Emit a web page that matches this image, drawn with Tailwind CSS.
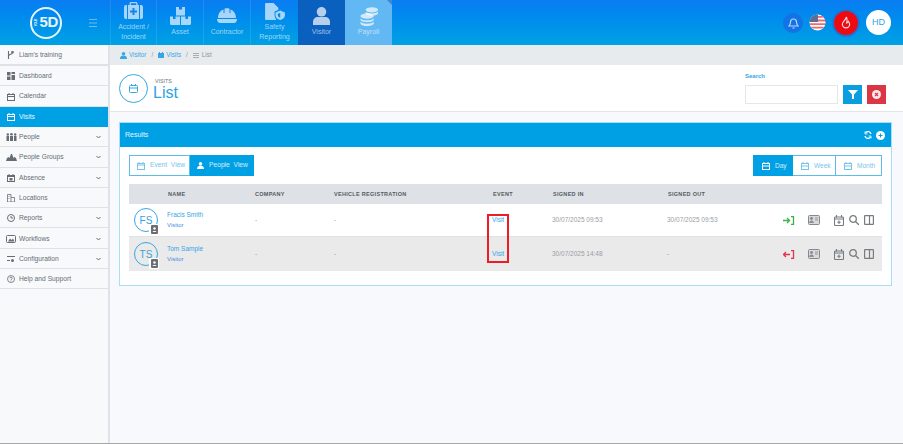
<!DOCTYPE html>
<html>
  <head>
    <title>Visits</title>
    <script src="https://cdn.jsdelivr.net/npm/@tailwindcss/browser@4"></script>
  </head>
  <body class="w-[903px] h-[444px] overflow-hidden bg-[#f7f9fc] font-['Liberation_Sans',sans-serif] text-[#6c757d]">
    <!-- top bar -->
    <header class="h-[45px] flex bg-gradient-to-b from-[#0a7cf2] to-[#00a1e4]">
      <div class="w-[110px] flex items-center shrink-0">
        <div class="ml-[30px] w-[32px] h-[32px] rounded-full border-2 border-white/90 flex items-center justify-center text-white/90 text-[15px] tracking-tight font-bold"><span class="text-[3px] mr-[1px] [writing-mode:vertical-rl] rotate-180">YOUR</span>5D</div>
        <svg class="ml-[27px] w-[8px] h-[8px] text-white/40" viewBox="0 0 8 8" stroke="currentColor" fill="none"><path d="M0 .5h8M0 4h8M0 7.500h8"/></svg>
      </div>
      <nav class="flex text-[7px] leading-[10px] text-white/60 text-center">
        <a class="w-[46px] border-l border-white/10 flex flex-col items-center pt-[2px]">
          <svg class="w-[19px] h-[17px] text-white/65" viewBox="0 0 19 17" fill="currentColor"><path d="M5.500 3V1.500C5.500.7 6.200 0 7 0h5c.8 0 1.500.7 1.500 1.500V3h-1.300V1.300H6.800V3zM0 5a2 2 0 0 1 2-2h1v14H2a2 2 0 0 1-2-2zM4 3h11v14H4zM16 3h1a2 2 0 0 1 2 2v10a2 2 0 0 1-2 2h-1z"/><path d="M8.500 6h2v2.500H13v2h-2.500V13h-2v-2.500H6v-2h2.500z" fill="#1384ea"/></svg>
          <span class="mt-[3px]">Accident /<br>Incident</span>
        </a>
        <a class="w-[47px] border-l border-white/10 flex flex-col items-center pt-[7px]">
          <svg class="w-[21px] h-[18px] text-white/65" viewBox="0 0 21 18" fill="currentColor"><path d="M6 0h3v2.500h3V0h3v8.500H6zM0 9.500h3V12h2.500V9.500H10V18H1.500A1.500 1.500 0 0 1 0 16.500zM11 9.500h4.500V12H18V9.500h3v7a1.500 1.500 0 0 1-1.500 1.500H11z"/></svg>
          <span class="mt-[2px]">Asset</span>
        </a>
        <a class="w-[47px] border-l border-white/10 flex flex-col items-center pt-[8px]">
          <svg class="w-[20px] h-[15px] text-white/65" viewBox="0 0 20 15" fill="currentColor"><path d="M1 10C1 5.500 3.500 2.500 6.500 1.500V5h1V.8C8.200.4 9 .3 10 .3s1.800.1 2.500.5V5h1V1.500c3 1 5.500 4 5.500 8.500z"/><path d="M0 11h20c0 2-1 4-3 4H3c-2 0-3-2-3-4z"/></svg>
          <span class="mt-[4px]">Contractor</span>
        </a>
        <a class="w-[48px] border-l border-white/10 flex flex-col items-center pt-[3px]">
          <svg class="w-[20px] h-[17px] text-white/65" viewBox="0 0 21 18" fill="currentColor"><path d="M1 0h8l5 5v2.500L10 9v3c0 2 .5 4 2 6H1a1 1 0 0 1-1-1V1a1 1 0 0 1 1-1z"/><path d="M16 8l5 2v3c0 2.500-2 4-5 5-3-1-5-2.500-5-5v-3zm0 2.500L13.500 11.500V13c0 1.200 1 2 2.500 2.700z" fill-rule="evenodd"/></svg>
          <span class="mt-[2px]">Safety<br>Reporting</span>
        </a>
        <a class="w-[47px] bg-[#0960bf] flex flex-col items-center pt-[7px]">
          <svg class="w-[17px] h-[18px] text-white/70" viewBox="0 0 17 18" fill="currentColor"><circle cx="8.500" cy="4.800" r="4.800"/><path d="M0 18v-3c0-3 2-5 5-5h7c3 0 5 2 5 5v3z"/></svg>
          <span class="mt-[2px]">Visitor</span>
        </a>
        <a class="relative w-[47px] bg-[#62b8f3] flex flex-col items-center pt-[7px] text-white/60">
          <span class="absolute top-0 right-0 border-t-[5px] border-l-[5px] border-t-[#3f86d8] border-l-transparent"></span>
          <svg class="w-[20px] h-[19px] text-white/70" viewBox="0 0 20 20" fill="currentColor"><ellipse cx="13" cy="3" rx="6.500" ry="2.800"/><path d="M6.500 5c1 1.200 3.500 1.800 6.500 1.800 2.500 0 5-.6 6.500-1.800v1.500c0 1.400-3 2.500-6.500 2.500S6.500 7.900 6.500 6.500z"/><ellipse cx="8" cy="9.500" rx="7" ry="2.800"/><path d="M1 12c1 1.200 4 2 7 2s6-.8 7-2v1.500c0 1.400-3 2.500-7 2.500s-7-1.100-7-2.500zM1 15.500c1 1.200 4 2 7 2s6-.8 7-2V17c0 1.700-3 3-7 3s-7-1.300-7-3z"/></svg>
          <span class="mt-[1px]">Payroll</span>
        </a>
      </nav>
      <div class="ml-auto flex items-center pr-[12px]">
        <div class="w-[20px] h-[20px] rounded-full bg-[#1273e6] flex items-center justify-center">
          <svg class="w-[11px] h-[12px] text-white/70" viewBox="0 0 11 12" fill="none" stroke="currentColor" stroke-width="1.200"><path d="M1 9c1-1 1.500-2 1.500-4a3 3 0 0 1 6 0c0 2 .5 3 1.500 4z"/><path d="M4.500 11h2"/></svg>
        </div>
        <svg class="ml-[6px] w-[17px] h-[17px]" viewBox="0 0 17 17"><defs><clipPath id="flag"><circle cx="8.500" cy="8.500" r="8"/></clipPath></defs><g clip-path="url(#flag)"><rect width="17" height="17" fill="#fff"/><path d="M0 2h17v1.800H0zM0 5.600h17v1.800H0zM0 9.200h17V11H0zM0 12.800h17v1.800H0z" fill="#ef6a6f"/><rect width="9" height="8" fill="#5a6f96"/></g></svg>
        <div class="ml-[8px] w-[24px] h-[24px] rounded-full bg-[#ee0a13] ring-2 ring-[#1278e0] flex items-center justify-center">
          <svg class="w-[10px] h-[13px] text-white/85" viewBox="0 0 11 14" fill="none" stroke="currentColor" stroke-width="1.300"><path d="M6 1c0 2.500-4.500 4.500-4.500 8a4 4 0 0 0 8 0c0-1.500-.8-2.500-1.500-3.300-.3 1-1 1.500-1.700 1.800C6.800 5 7 3 6 1z"/></svg>
        </div>
        <div class="ml-[8px] w-[25px] h-[25px] rounded-full bg-white flex items-center justify-center text-[9px] text-[#2ea3e6]">HD</div>
      </div>
    </header>

    <div class="flex h-[398px] border-b border-[#a8a8a8] box-content">
      <!-- sidebar -->
      <aside class="w-[110px] shrink-0 bg-[#f8f9fb] border-r-2 border-[#dfe2e6] text-[6.700px] text-[#666d75]">
        <a class="h-[21px] pt-[1px] border-b-2 border-[#dee1e5] flex items-center pl-[7px] gap-[5px]">
          <svg class="w-[7px] h-[8px] shrink-0" viewBox="0 0 7 8" fill="none" stroke="currentColor" stroke-width="1.100"><path d="M1.500 0v8M1.500 5c0-2 4-1 4-3.500"/><circle cx="5.500" cy="1.200" r=".8"/></svg>Liam's training
        </a>
        <a class="h-[20px] pt-[1px] border-b border-[#dee1e5] flex items-center pl-[7px] gap-[4px]">
          <svg class="w-[8px] h-[8px] shrink-0" viewBox="0 0 8 8" fill="currentColor"><path d="M0 0h3.500v3.500H0zM4.500 0H8v2H4.500zM4.500 3H8v5H4.500zM0 4.500h3.500V8H0z"/></svg>Dashboard
        </a>
        <a class="h-[21px] pt-[1px] border-b border-[#dee1e5] flex items-center pl-[7px] gap-[4px]">
          <svg class="w-[8px] h-[8px] shrink-0" viewBox="0 0 8 8" fill="none" stroke="currentColor"><rect x=".5" y="1.500" width="7" height="6"/><path d="M0 3.500h8M2 0v2M6 0v2"/></svg>Calendar
        </a>
        <a class="h-[20px] bg-[#00a1e4] text-white/90 flex items-center pl-[7px] gap-[4px]">
          <svg class="w-[8px] h-[8px] shrink-0 text-white" viewBox="0 0 8 8" fill="none" stroke="currentColor"><rect x=".5" y="1.500" width="7" height="6"/><path d="M0 3.500h8M2 0v2M6 0v2"/></svg>Visits
        </a>
        <a class="h-[20.300px] pt-[1px] border-b border-[#dee1e5] flex items-center pl-[6px] gap-[2px]">
          <svg class="w-[11px] h-[8px] shrink-0" viewBox="0 0 11 8" fill="currentColor"><circle cx="1.800" cy="1.500" r="1.200"/><circle cx="5.500" cy="1.300" r="1.300"/><circle cx="9.200" cy="1.500" r="1.200"/><path d="M.5 3h2.500v5H.5zM4 3h3v5H4zM8 3h2.500v5H8z"/></svg>People
          <svg class="ml-auto mr-[7px] w-[5px] h-[4px]" viewBox="0 0 5 4" fill="none" stroke="currentColor"><path d="M.5 1l2 2 2-2"/></svg>
        </a>
        <a class="h-[20.300px] pt-[1px] border-b border-[#dee1e5] flex items-center pl-[6px] gap-[2px]">
          <svg class="w-[11px] h-[8px] shrink-0" viewBox="0 0 11 8" fill="currentColor"><path d="M0 8l1-3 1.500-1 1 1L5 1h1l1.500 4 1-1L10 5l1 3z"/></svg>People Groups
          <svg class="ml-auto mr-[7px] w-[5px] h-[4px]" viewBox="0 0 5 4" fill="none" stroke="currentColor"><path d="M.5 1l2 2 2-2"/></svg>
        </a>
        <a class="h-[20.300px] pt-[1px] border-b border-[#dee1e5] flex items-center pl-[7px] gap-[4px]">
          <svg class="w-[8px] h-[8px] shrink-0" viewBox="0 0 8 8" fill="none" stroke="currentColor"><rect x=".5" y="1.500" width="7" height="6"/><path d="M0 2.500h8M2 0v2M6 0v2"/><rect x="3" y="4.500" width="2" height="1.500" fill="currentColor"/></svg>Absence
          <svg class="ml-auto mr-[7px] w-[5px] h-[4px]" viewBox="0 0 5 4" fill="none" stroke="currentColor"><path d="M.5 1l2 2 2-2"/></svg>
        </a>
        <a class="h-[20.300px] pt-[1px] border-b border-[#dee1e5] flex items-center pl-[7px] gap-[4px]">
          <svg class="w-[8px] h-[8px] shrink-0" viewBox="0 0 8 8" fill="none" stroke="currentColor" stroke-width=".8"><path d="M.5 8V.5h3.500V8M4 3.500h3.500V8M0 8h8M1.500 2.500h1M1.500 4.500h1"/></svg>Locations
        </a>
        <a class="h-[20.300px] pt-[1px] border-b border-[#dee1e5] flex items-center pl-[7px] gap-[4px]">
          <svg class="w-[8px] h-[8px] shrink-0" viewBox="0 0 8 8" fill="none" stroke="currentColor"><circle cx="4" cy="4" r="3.500"/><path d="M4 2v2h2"/></svg>Reports
          <svg class="ml-auto mr-[7px] w-[5px] h-[4px]" viewBox="0 0 5 4" fill="none" stroke="currentColor"><path d="M.5 1l2 2 2-2"/></svg>
        </a>
        <a class="h-[20.300px] pt-[1px] border-b border-[#dee1e5] flex items-center pl-[6px] gap-[3px]">
          <svg class="w-[10px] h-[8px] shrink-0" viewBox="0 0 10 8" fill="none" stroke="currentColor"><rect x=".5" y=".5" width="9" height="7" rx="1"/><path d="M2 6.500l2-3 1.500 1.500L7 3.500l1.500 3z" fill="currentColor" stroke="none"/></svg>Workflows
          <svg class="ml-auto mr-[7px] w-[5px] h-[4px]" viewBox="0 0 5 4" fill="none" stroke="currentColor"><path d="M.5 1l2 2 2-2"/></svg>
        </a>
        <a class="h-[20.300px] pt-[1px] border-b border-[#dee1e5] flex items-center pl-[7px] gap-[4px]">
          <svg class="w-[8px] h-[7px] shrink-0" viewBox="0 0 8 7" fill="currentColor"><path d="M0 1h8v1H0zM0 5h3v1H0z"/><circle cx="5.500" cy="5.500" r="1.500"/></svg>Configuration
          <svg class="ml-auto mr-[7px] w-[5px] h-[4px]" viewBox="0 0 5 4" fill="none" stroke="currentColor"><path d="M.5 1l2 2 2-2"/></svg>
        </a>
        <a class="h-[20.300px] pt-[1px] border-b border-[#dee1e5] flex items-center pl-[7px] gap-[4px]">
          <svg class="w-[8px] h-[8px] shrink-0" viewBox="0 0 8 8" fill="none" stroke="currentColor" stroke-width=".8"><circle cx="4" cy="4" r="3.500"/><path d="M2.800 3.200c0-1.500 2.400-1.500 2.400 0 0 .9-1.200.9-1.200 1.800M4 5.600v.8"/></svg>Help and Support
        </a>
      </aside>

      <main class="flex-1 min-w-0">
        <!-- breadcrumb -->
        <div class="h-[20px] bg-[#e8ebee] flex items-center pl-[10px] text-[6.300px] text-[#36a6e6]">
          <svg class="w-[7px] h-[7px] mr-[2px]" viewBox="0 0 6 6" fill="currentColor"><circle cx="3" cy="1.500" r="1.500"/><path d="M0 6c0-2 1-3 3-3s3 1 3 3z"/></svg>
          <span>Visitor</span><span class="mx-[5px] text-[#8b939b]">/</span>
          <svg class="w-[6px] h-[6px] mr-[2px]" viewBox="0 0 6 6" fill="currentColor"><path d="M1 0h1v1h2V0h1v1h1v5H0V1h1z"/></svg>
          <span>Visits</span><span class="mx-[5px] text-[#8b939b]">/</span>
          <svg class="w-[6px] h-[5px] mr-[3px] text-[#8b939b]" viewBox="0 0 6 5" stroke="currentColor" stroke-width=".7" fill="none"><path d="M0 .5h6M0 2.500h6M0 4.500h6"/></svg>
          <span class="text-[#8b939b]">List</span>
        </div>
        <!-- page title -->
        <div class="h-[47px] bg-white border-b border-[#e3e6ea] flex pl-[9px]">
          <div class="mt-[9px] w-[29px] h-[29px] rounded-full border border-[#36a6e6] flex items-center justify-center">
            <svg class="w-[9px] h-[9px] text-[#36a6e6]" viewBox="0 0 9 9" fill="none" stroke="currentColor"><rect x=".5" y="1.500" width="8" height="7" rx="1"/><path d="M0 4h9M2.500 0v2M6.500 0v2"/></svg>
          </div>
          <div class="ml-[5px] mt-[13px]">
            <div class="text-[5.300px] leading-[6px] text-[#6c757d] pl-[2px]">VISITS</div>
            <div class="text-[16px] leading-[18px] text-[#29a3e4]">List</div>
          </div>
          <div class="ml-auto mr-[17px] mt-[6px] w-[141px]">
            <div class="text-[6px] leading-[10px] font-bold text-[#36a6e6]">Search</div>
            <div class="mt-[4px] flex">
              <div class="w-[93px] h-[19px] bg-white border border-[#e5e7ea]"></div>
              <div class="ml-[5px] w-[19px] h-[19px] bg-[#0a9ee0] flex items-center justify-center">
                <svg class="w-[10px] h-[9px] text-white" viewBox="0 0 10 9" fill="currentColor"><path d="M0 0h10L6 4.500V9H4V4.500z"/></svg>
              </div>
              <div class="ml-[5px] w-[19px] h-[19px] bg-[#dc3545] flex items-center justify-center">
                <svg class="w-[9px] h-[9px]" viewBox="0 0 9 9"><circle cx="4.500" cy="4.500" r="4.500" fill="#fff" fill-opacity=".9"/><path d="M3 3l3 3M6 3L3 6" stroke="#dc3545" stroke-width="1.200"/></svg>
              </div>
            </div>
          </div>
        </div>
        <!-- results card -->
        <section class="relative ml-[9px] mt-[10px] w-[773px] h-[164px] bg-white border border-[#a9dcf5]">
          <div class="h-[24px] bg-[#00a1e4] flex items-center pl-[5px] pr-[6px] text-[7px] text-white/90">
            Results
            <svg class="ml-auto w-[8px] h-[8px] text-white" viewBox="0 0 8 8" fill="none" stroke="currentColor" stroke-width="1.300"><path d="M7 3A3 3 0 0 0 1.500 2M1 5a3 3 0 0 0 5.500 1"/><path d="M1 .5v2.500h2.500M7 7.500V5H4.500" stroke-width=".8"/></svg>
            <svg class="ml-[4px] w-[9px] h-[9px]" viewBox="0 0 9 9"><circle cx="4.500" cy="4.500" r="4.500" fill="#fff"/><path d="M4.500 2.500v4M2.500 4.500h4" stroke="#00a1e4"/></svg>
          </div>
          <div class="flex justify-between px-[9px] pt-[8px]">
            <div class="flex h-[21px] text-[6.700px]">
              <a class="w-[61px] border border-[#5cbdea] text-[#74c5ec] flex items-center pl-[7px] gap-[5px]">
                <svg class="w-[8px] h-[8px]" viewBox="0 0 8 8" fill="none" stroke="currentColor"><rect x=".5" y="1.500" width="7" height="6"/><path d="M0 3h8M2 0v2M6 0v2"/></svg>Event&nbsp; View
              </a>
              <a class="w-[64px] bg-[#00a1e4] text-white/80 flex items-center pl-[7px] gap-[5px]">
                <svg class="w-[7px] h-[7px] text-white" viewBox="0 0 7 7" fill="currentColor"><circle cx="3.500" cy="1.700" r="1.700"/><path d="M0 7c0-2 1.500-3.500 3.500-3.500S7 5 7 7z"/></svg>People&nbsp; View
              </a>
            </div>
            <div class="flex h-[21px] text-[6.500px]">
              <a class="w-[40px] bg-[#00a1e4] text-white/80 flex items-center pl-[9px] gap-[5px]">
                <svg class="w-[8px] h-[8px] text-white" viewBox="0 0 8 8" fill="none" stroke="currentColor"><rect x=".5" y="1.500" width="7" height="6"/><path d="M0 4h8M2 0v2M6 0v2"/></svg>Day
              </a>
              <a class="w-[43px] border border-l-0 border-[#5cbdea] text-[#74c5ec] flex items-center pl-[8px] gap-[5px]">
                <svg class="w-[8px] h-[8px]" viewBox="0 0 8 8" fill="none" stroke="currentColor"><rect x=".5" y="1.500" width="7" height="6"/><path d="M0 4h8M2 0v2M6 0v2"/></svg>Week
              </a>
              <a class="w-[46px] border border-l-0 border-[#5cbdea] text-[#74c5ec] flex items-center pl-[8px] gap-[5px]">
                <svg class="w-[8px] h-[8px]" viewBox="0 0 8 8" fill="none" stroke="currentColor"><rect x=".5" y="1.500" width="7" height="6"/><path d="M0 4h8M2 0v2M6 0v2"/></svg>Month
              </a>
            </div>
          </div>
          <!-- table -->
          <div class="mx-[9px] mt-[8px] text-[6.500px]">
            <div class="h-[20px] bg-[#dee1e5] grid grid-cols-[126px_79px_159px_60px_115px_214px] items-center font-bold text-[5.500px] tracking-[.3px] text-[#555c63]">
              <span class="pl-[39px]">NAME</span><span>COMPANY</span><span>VEHICLE REGISTRATION</span><span>EVENT</span><span>SIGNED IN</span><span>SIGNED OUT</span>
            </div>
            <div class="h-[33px] bg-white border-b border-[#dee1e5] grid grid-cols-[126px_79px_159px_60px_115px_214px] items-center text-[#9aa0a6]">
              <div class="flex items-center">
                <div class="relative ml-[5px] w-[24px] h-[24px] rounded-full border border-[#36a6e6] flex items-center justify-center text-[10px] text-[#3a9fd8]">FS
                  <span class="absolute -right-[2px] -bottom-[4px] w-[10px] h-[11px] bg-white flex items-center justify-center"><svg class="w-[7px] h-[9px]" viewBox="0 0 7 9"><rect width="7" height="9" rx="1" fill="#6b6f73"/><circle cx="3.500" cy="3.500" r="1.200" fill="#fff"/><path d="M1.500 7c0-1.500 4-1.500 4 0z" fill="#fff"/></svg></span>
                </div>
                <div class="ml-[9px] text-[6.500px] leading-[10px] -mt-[1px]">
                  <div class="text-[#36a6e6]">Fracis Smith</div>
                  <div class="text-[#3f8fe6] text-[6px]">Visitor</div>
                </div>
              </div>
              <span>-</span><span>-</span>
              <span class="-ml-[1px] text-[#36a6e6]">Visit</span>
              <span class="-ml-[1px]">30/07/2025 09:53</span>
              <div class="flex items-center">
                <span class="w-[116px] -ml-[1px]">30/07/2025 09:53</span>
                <svg class="w-[12px] h-[9px] text-[#3bb34a]" viewBox="0 0 12 9" fill="none" stroke="currentColor" stroke-width="1.300"><path d="M0 4.500h6M4 2l2.500 2.500L4 7M8 .7h2.500v7.600H8"/></svg>
                <svg class="ml-[13px] w-[12px] h-[10px] text-[#85898d]" viewBox="0 0 12 10"><rect x=".5" y=".5" width="11" height="9" rx="1" fill="#d8dadc" stroke="currentColor"/><circle cx="3.500" cy="3.500" r="1.400" fill="currentColor"/><path d="M1.500 7.500c0-2 4-2 4 0zM7 3h3M7 5h3" fill="currentColor" stroke="currentColor" stroke-width=".8"/></svg>
                <svg class="ml-[14px] w-[10px] h-[11px] text-[#777c81]" viewBox="0 0 10 11" fill="none" stroke="currentColor" stroke-width="1.100"><rect x=".5" y="2" width="9" height="8.500" rx="1"/><path d="M0 4h10M2.500 0v2.500M7.500 0v2.500M5 5.500v3.500M3.300 7.200h3.400"/></svg>
                <svg class="ml-[5px] w-[10px] h-[10px] text-[#777c81]" viewBox="0 0 10 10" fill="none" stroke="currentColor" stroke-width="1.300"><circle cx="4" cy="4" r="3.300"/><path d="M6.500 6.500L10 10"/></svg>
                <svg class="ml-[5px] w-[10px] h-[10px] text-[#777c81]" viewBox="0 0 10 10" fill="none" stroke="currentColor" stroke-width="1.200"><rect x=".6" y=".6" width="8.800" height="8.800" rx=".5"/><path d="M5.500 0v10"/></svg>
              </div>
            </div>
            <div class="h-[34px] bg-[#eaeaea] grid grid-cols-[126px_79px_159px_60px_115px_214px] items-center text-[#9aa0a6]">
              <div class="flex items-center">
                <div class="relative ml-[5px] w-[24px] h-[24px] rounded-full border border-[#36a6e6] flex items-center justify-center text-[10px] text-[#3a9fd8]">TS
                  <span class="absolute -right-[2px] -bottom-[4px] w-[10px] h-[11px] bg-white flex items-center justify-center"><svg class="w-[7px] h-[9px]" viewBox="0 0 7 9"><rect width="7" height="9" rx="1" fill="#6b6f73"/><circle cx="3.500" cy="3.500" r="1.200" fill="#fff"/><path d="M1.500 7c0-1.500 4-1.500 4 0z" fill="#fff"/></svg></span>
                </div>
                <div class="ml-[9px] text-[6.500px] leading-[10px]">
                  <div class="text-[#36a6e6]">Tom Sample</div>
                  <div class="text-[#3f8fe6] text-[6px]">Visitor</div>
                </div>
              </div>
              <span>-</span><span>-</span>
              <span class="-ml-[1px] text-[#36a6e6]">Visit</span>
              <span class="-ml-[1px]">30/07/2025 14:48</span>
              <div class="flex items-center">
                <span class="w-[116px] -ml-[1px]">-</span>
                <svg class="w-[12px] h-[9px] text-[#e0354a]" viewBox="0 0 12 9" fill="none" stroke="currentColor" stroke-width="1.300"><path d="M7 4.500H1M3 2L.5 4.500 3 7M8 .7h2.500v7.600H8"/></svg>
                <svg class="ml-[13px] w-[12px] h-[10px] text-[#85898d]" viewBox="0 0 12 10"><rect x=".5" y=".5" width="11" height="9" rx="1" fill="#d8dadc" stroke="currentColor"/><circle cx="3.500" cy="3.500" r="1.400" fill="currentColor"/><path d="M1.500 7.500c0-2 4-2 4 0zM7 3h3M7 5h3" fill="currentColor" stroke="currentColor" stroke-width=".8"/></svg>
                <svg class="ml-[14px] w-[10px] h-[11px] text-[#777c81]" viewBox="0 0 10 11" fill="none" stroke="currentColor" stroke-width="1.100"><rect x=".5" y="2" width="9" height="8.500" rx="1"/><path d="M0 4h10M2.500 0v2.500M7.500 0v2.500M5 5.500v3.500M3.300 7.200h3.400"/></svg>
                <svg class="ml-[5px] w-[10px] h-[10px] text-[#777c81]" viewBox="0 0 10 10" fill="none" stroke="currentColor" stroke-width="1.300"><circle cx="4" cy="4" r="3.300"/><path d="M6.500 6.500L10 10"/></svg>
                <svg class="ml-[5px] w-[10px] h-[10px] text-[#777c81]" viewBox="0 0 10 10" fill="none" stroke="currentColor" stroke-width="1.200"><rect x=".6" y=".6" width="8.800" height="8.800" rx=".5"/><path d="M5.500 0v10"/></svg>
              </div>
            </div>
          </div>
          <!-- red highlight drawn over the event column -->
          <div class="absolute left-[367px] top-[91px] w-[22px] h-[49px] border-2 border-[#ee1c25]"></div>
        </section>
      </main>
    </div>
  </body>
</html>
